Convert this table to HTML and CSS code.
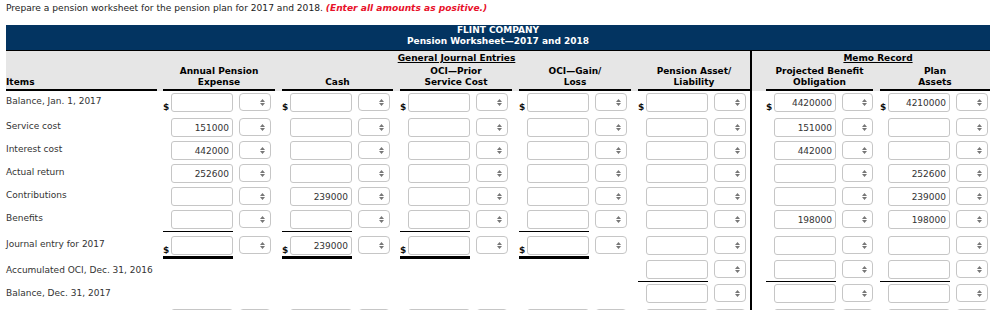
FILE: index.html
```html
<!DOCTYPE html>
<html lang="en">
<head>
<meta charset="utf-8">
<title>Pension Worksheet</title>
<link rel="stylesheet" href="styles.css">
</head>
<body>
<p class="intro">Prepare a pension worksheet for the pension plan for 2017 and 2018. <em class="note">(Enter all amounts as positive.)</em></p>
<div class="sheet">
  <div class="title"><div>FLINT COMPANY</div><div>Pension Worksheet—2017 and 2018</div></div>
  <div class="grid head">
    <div class="grp gje"><span>General Journal Entries</span></div>
    <div class="grp memo"><span>Memo Record</span></div>
    <div class="hc c0"><div class="hl">Items</div></div>
    <div class="hc c1"><div class="hl">Annual Pension<br>Expense</div></div>
    <div class="hc c2"><div class="hl">Cash</div></div>
    <div class="hc c3"><div class="hl">OCI—Prior<br>Service Cost</div></div>
    <div class="hc c4"><div class="hl">OCI—Gain/<br>Loss</div></div>
    <div class="hc c5"><div class="hl">Pension Asset/<br>Liability</div></div>
    <div class="hc c6"><div class="hl">Projected Benefit<br>Obligation</div></div>
    <div class="hc c7"><div class="hl">Plan<br>Assets</div></div>
  </div>

  <div class="grid row r-first">
    <div class="cell c0 lbl">Balance, Jan. 1, 2017</div>
    <div class="cell c1"><div class="fld"><span class="amt"><span class="cur">$</span><input class="num" type="text" value=""></span><span class="sel"><svg class="ud" viewBox="0 0 5 7" width="5" height="7"><path d="M0 3 2.5 0 5 3zM0 4 2.5 7 5 4z"/></svg></span></div></div>
    <div class="cell c2"><div class="fld"><span class="amt"><span class="cur">$</span><input class="num" type="text" value=""></span><span class="sel"><svg class="ud" viewBox="0 0 5 7" width="5" height="7"><path d="M0 3 2.5 0 5 3zM0 4 2.5 7 5 4z"/></svg></span></div></div>
    <div class="cell c3"><div class="fld"><span class="amt"><span class="cur">$</span><input class="num" type="text" value=""></span><span class="sel"><svg class="ud" viewBox="0 0 5 7" width="5" height="7"><path d="M0 3 2.5 0 5 3zM0 4 2.5 7 5 4z"/></svg></span></div></div>
    <div class="cell c4"><div class="fld"><span class="amt"><span class="cur">$</span><input class="num" type="text" value=""></span><span class="sel"><svg class="ud" viewBox="0 0 5 7" width="5" height="7"><path d="M0 3 2.5 0 5 3zM0 4 2.5 7 5 4z"/></svg></span></div></div>
    <div class="cell c5"><div class="fld"><span class="amt"><span class="cur">$</span><input class="num" type="text" value=""></span><span class="sel"><svg class="ud" viewBox="0 0 5 7" width="5" height="7"><path d="M0 3 2.5 0 5 3zM0 4 2.5 7 5 4z"/></svg></span></div></div>
    <div class="cell c6"><div class="fld"><span class="amt"><span class="cur">$</span><input class="num" type="text" value="4420000"></span><span class="sel"><svg class="ud" viewBox="0 0 5 7" width="5" height="7"><path d="M0 3 2.5 0 5 3zM0 4 2.5 7 5 4z"/></svg></span></div></div>
    <div class="cell c7"><div class="fld"><span class="amt"><span class="cur">$</span><input class="num" type="text" value="4210000"></span><span class="sel"><svg class="ud" viewBox="0 0 5 7" width="5" height="7"><path d="M0 3 2.5 0 5 3zM0 4 2.5 7 5 4z"/></svg></span></div></div>
  </div>

  <div class="grid row">
    <div class="cell c0 lbl">Service cost</div>
    <div class="cell c1"><div class="fld"><span class="amt"><span class="cur"></span><input class="num" type="text" value="151000"></span><span class="sel"><svg class="ud" viewBox="0 0 5 7" width="5" height="7"><path d="M0 3 2.5 0 5 3zM0 4 2.5 7 5 4z"/></svg></span></div></div>
    <div class="cell c2"><div class="fld"><span class="amt"><span class="cur"></span><input class="num" type="text" value=""></span><span class="sel"><svg class="ud" viewBox="0 0 5 7" width="5" height="7"><path d="M0 3 2.5 0 5 3zM0 4 2.5 7 5 4z"/></svg></span></div></div>
    <div class="cell c3"><div class="fld"><span class="amt"><span class="cur"></span><input class="num" type="text" value=""></span><span class="sel"><svg class="ud" viewBox="0 0 5 7" width="5" height="7"><path d="M0 3 2.5 0 5 3zM0 4 2.5 7 5 4z"/></svg></span></div></div>
    <div class="cell c4"><div class="fld"><span class="amt"><span class="cur"></span><input class="num" type="text" value=""></span><span class="sel"><svg class="ud" viewBox="0 0 5 7" width="5" height="7"><path d="M0 3 2.5 0 5 3zM0 4 2.5 7 5 4z"/></svg></span></div></div>
    <div class="cell c5"><div class="fld"><span class="amt"><span class="cur"></span><input class="num" type="text" value=""></span><span class="sel"><svg class="ud" viewBox="0 0 5 7" width="5" height="7"><path d="M0 3 2.5 0 5 3zM0 4 2.5 7 5 4z"/></svg></span></div></div>
    <div class="cell c6"><div class="fld"><span class="amt"><span class="cur"></span><input class="num" type="text" value="151000"></span><span class="sel"><svg class="ud" viewBox="0 0 5 7" width="5" height="7"><path d="M0 3 2.5 0 5 3zM0 4 2.5 7 5 4z"/></svg></span></div></div>
    <div class="cell c7"><div class="fld"><span class="amt"><span class="cur"></span><input class="num" type="text" value=""></span><span class="sel"><svg class="ud" viewBox="0 0 5 7" width="5" height="7"><path d="M0 3 2.5 0 5 3zM0 4 2.5 7 5 4z"/></svg></span></div></div>
  </div>

  <div class="grid row">
    <div class="cell c0 lbl">Interest cost</div>
    <div class="cell c1"><div class="fld"><span class="amt"><span class="cur"></span><input class="num" type="text" value="442000"></span><span class="sel"><svg class="ud" viewBox="0 0 5 7" width="5" height="7"><path d="M0 3 2.5 0 5 3zM0 4 2.5 7 5 4z"/></svg></span></div></div>
    <div class="cell c2"><div class="fld"><span class="amt"><span class="cur"></span><input class="num" type="text" value=""></span><span class="sel"><svg class="ud" viewBox="0 0 5 7" width="5" height="7"><path d="M0 3 2.5 0 5 3zM0 4 2.5 7 5 4z"/></svg></span></div></div>
    <div class="cell c3"><div class="fld"><span class="amt"><span class="cur"></span><input class="num" type="text" value=""></span><span class="sel"><svg class="ud" viewBox="0 0 5 7" width="5" height="7"><path d="M0 3 2.5 0 5 3zM0 4 2.5 7 5 4z"/></svg></span></div></div>
    <div class="cell c4"><div class="fld"><span class="amt"><span class="cur"></span><input class="num" type="text" value=""></span><span class="sel"><svg class="ud" viewBox="0 0 5 7" width="5" height="7"><path d="M0 3 2.5 0 5 3zM0 4 2.5 7 5 4z"/></svg></span></div></div>
    <div class="cell c5"><div class="fld"><span class="amt"><span class="cur"></span><input class="num" type="text" value=""></span><span class="sel"><svg class="ud" viewBox="0 0 5 7" width="5" height="7"><path d="M0 3 2.5 0 5 3zM0 4 2.5 7 5 4z"/></svg></span></div></div>
    <div class="cell c6"><div class="fld"><span class="amt"><span class="cur"></span><input class="num" type="text" value="442000"></span><span class="sel"><svg class="ud" viewBox="0 0 5 7" width="5" height="7"><path d="M0 3 2.5 0 5 3zM0 4 2.5 7 5 4z"/></svg></span></div></div>
    <div class="cell c7"><div class="fld"><span class="amt"><span class="cur"></span><input class="num" type="text" value=""></span><span class="sel"><svg class="ud" viewBox="0 0 5 7" width="5" height="7"><path d="M0 3 2.5 0 5 3zM0 4 2.5 7 5 4z"/></svg></span></div></div>
  </div>

  <div class="grid row">
    <div class="cell c0 lbl">Actual return</div>
    <div class="cell c1"><div class="fld"><span class="amt"><span class="cur"></span><input class="num" type="text" value="252600"></span><span class="sel"><svg class="ud" viewBox="0 0 5 7" width="5" height="7"><path d="M0 3 2.5 0 5 3zM0 4 2.5 7 5 4z"/></svg></span></div></div>
    <div class="cell c2"><div class="fld"><span class="amt"><span class="cur"></span><input class="num" type="text" value=""></span><span class="sel"><svg class="ud" viewBox="0 0 5 7" width="5" height="7"><path d="M0 3 2.5 0 5 3zM0 4 2.5 7 5 4z"/></svg></span></div></div>
    <div class="cell c3"><div class="fld"><span class="amt"><span class="cur"></span><input class="num" type="text" value=""></span><span class="sel"><svg class="ud" viewBox="0 0 5 7" width="5" height="7"><path d="M0 3 2.5 0 5 3zM0 4 2.5 7 5 4z"/></svg></span></div></div>
    <div class="cell c4"><div class="fld"><span class="amt"><span class="cur"></span><input class="num" type="text" value=""></span><span class="sel"><svg class="ud" viewBox="0 0 5 7" width="5" height="7"><path d="M0 3 2.5 0 5 3zM0 4 2.5 7 5 4z"/></svg></span></div></div>
    <div class="cell c5"><div class="fld"><span class="amt"><span class="cur"></span><input class="num" type="text" value=""></span><span class="sel"><svg class="ud" viewBox="0 0 5 7" width="5" height="7"><path d="M0 3 2.5 0 5 3zM0 4 2.5 7 5 4z"/></svg></span></div></div>
    <div class="cell c6"><div class="fld"><span class="amt"><span class="cur"></span><input class="num" type="text" value=""></span><span class="sel"><svg class="ud" viewBox="0 0 5 7" width="5" height="7"><path d="M0 3 2.5 0 5 3zM0 4 2.5 7 5 4z"/></svg></span></div></div>
    <div class="cell c7"><div class="fld"><span class="amt"><span class="cur"></span><input class="num" type="text" value="252600"></span><span class="sel"><svg class="ud" viewBox="0 0 5 7" width="5" height="7"><path d="M0 3 2.5 0 5 3zM0 4 2.5 7 5 4z"/></svg></span></div></div>
  </div>

  <div class="grid row">
    <div class="cell c0 lbl">Contributions</div>
    <div class="cell c1"><div class="fld"><span class="amt"><span class="cur"></span><input class="num" type="text" value=""></span><span class="sel"><svg class="ud" viewBox="0 0 5 7" width="5" height="7"><path d="M0 3 2.5 0 5 3zM0 4 2.5 7 5 4z"/></svg></span></div></div>
    <div class="cell c2"><div class="fld"><span class="amt"><span class="cur"></span><input class="num" type="text" value="239000"></span><span class="sel"><svg class="ud" viewBox="0 0 5 7" width="5" height="7"><path d="M0 3 2.5 0 5 3zM0 4 2.5 7 5 4z"/></svg></span></div></div>
    <div class="cell c3"><div class="fld"><span class="amt"><span class="cur"></span><input class="num" type="text" value=""></span><span class="sel"><svg class="ud" viewBox="0 0 5 7" width="5" height="7"><path d="M0 3 2.5 0 5 3zM0 4 2.5 7 5 4z"/></svg></span></div></div>
    <div class="cell c4"><div class="fld"><span class="amt"><span class="cur"></span><input class="num" type="text" value=""></span><span class="sel"><svg class="ud" viewBox="0 0 5 7" width="5" height="7"><path d="M0 3 2.5 0 5 3zM0 4 2.5 7 5 4z"/></svg></span></div></div>
    <div class="cell c5"><div class="fld"><span class="amt"><span class="cur"></span><input class="num" type="text" value=""></span><span class="sel"><svg class="ud" viewBox="0 0 5 7" width="5" height="7"><path d="M0 3 2.5 0 5 3zM0 4 2.5 7 5 4z"/></svg></span></div></div>
    <div class="cell c6"><div class="fld"><span class="amt"><span class="cur"></span><input class="num" type="text" value=""></span><span class="sel"><svg class="ud" viewBox="0 0 5 7" width="5" height="7"><path d="M0 3 2.5 0 5 3zM0 4 2.5 7 5 4z"/></svg></span></div></div>
    <div class="cell c7"><div class="fld"><span class="amt"><span class="cur"></span><input class="num" type="text" value="239000"></span><span class="sel"><svg class="ud" viewBox="0 0 5 7" width="5" height="7"><path d="M0 3 2.5 0 5 3zM0 4 2.5 7 5 4z"/></svg></span></div></div>
  </div>

  <div class="grid row">
    <div class="cell c0 lbl">Benefits</div>
    <div class="cell c1"><div class="fld"><span class="amt ul"><span class="cur"></span><input class="num" type="text" value=""></span><span class="sel"><svg class="ud" viewBox="0 0 5 7" width="5" height="7"><path d="M0 3 2.5 0 5 3zM0 4 2.5 7 5 4z"/></svg></span></div></div>
    <div class="cell c2"><div class="fld"><span class="amt ul"><span class="cur"></span><input class="num" type="text" value=""></span><span class="sel"><svg class="ud" viewBox="0 0 5 7" width="5" height="7"><path d="M0 3 2.5 0 5 3zM0 4 2.5 7 5 4z"/></svg></span></div></div>
    <div class="cell c3"><div class="fld"><span class="amt ul"><span class="cur"></span><input class="num" type="text" value=""></span><span class="sel"><svg class="ud" viewBox="0 0 5 7" width="5" height="7"><path d="M0 3 2.5 0 5 3zM0 4 2.5 7 5 4z"/></svg></span></div></div>
    <div class="cell c4"><div class="fld"><span class="amt ul"><span class="cur"></span><input class="num" type="text" value=""></span><span class="sel"><svg class="ud" viewBox="0 0 5 7" width="5" height="7"><path d="M0 3 2.5 0 5 3zM0 4 2.5 7 5 4z"/></svg></span></div></div>
    <div class="cell c5"><div class="fld"><span class="amt"><span class="cur"></span><input class="num" type="text" value=""></span><span class="sel"><svg class="ud" viewBox="0 0 5 7" width="5" height="7"><path d="M0 3 2.5 0 5 3zM0 4 2.5 7 5 4z"/></svg></span></div></div>
    <div class="cell c6"><div class="fld"><span class="amt"><span class="cur"></span><input class="num" type="text" value="198000"></span><span class="sel"><svg class="ud" viewBox="0 0 5 7" width="5" height="7"><path d="M0 3 2.5 0 5 3zM0 4 2.5 7 5 4z"/></svg></span></div></div>
    <div class="cell c7"><div class="fld"><span class="amt"><span class="cur"></span><input class="num" type="text" value="198000"></span><span class="sel"><svg class="ud" viewBox="0 0 5 7" width="5" height="7"><path d="M0 3 2.5 0 5 3zM0 4 2.5 7 5 4z"/></svg></span></div></div>
  </div>

  <div class="grid row r-je">
    <div class="cell c0 lbl">Journal entry for 2017</div>
    <div class="cell c1"><div class="fld"><span class="amt ul2"><span class="cur">$</span><input class="num" type="text" value=""></span><span class="sel"><svg class="ud" viewBox="0 0 5 7" width="5" height="7"><path d="M0 3 2.5 0 5 3zM0 4 2.5 7 5 4z"/></svg></span></div></div>
    <div class="cell c2"><div class="fld"><span class="amt ul2"><span class="cur">$</span><input class="num" type="text" value="239000"></span><span class="sel"><svg class="ud" viewBox="0 0 5 7" width="5" height="7"><path d="M0 3 2.5 0 5 3zM0 4 2.5 7 5 4z"/></svg></span></div></div>
    <div class="cell c3"><div class="fld"><span class="amt ul2"><span class="cur">$</span><input class="num" type="text" value=""></span><span class="sel"><svg class="ud" viewBox="0 0 5 7" width="5" height="7"><path d="M0 3 2.5 0 5 3zM0 4 2.5 7 5 4z"/></svg></span></div></div>
    <div class="cell c4"><div class="fld"><span class="amt ul2"><span class="cur">$</span><input class="num" type="text" value=""></span><span class="sel"><svg class="ud" viewBox="0 0 5 7" width="5" height="7"><path d="M0 3 2.5 0 5 3zM0 4 2.5 7 5 4z"/></svg></span></div></div>
    <div class="cell c5"><div class="fld"><span class="amt"><span class="cur"></span><input class="num" type="text" value=""></span><span class="sel"><svg class="ud" viewBox="0 0 5 7" width="5" height="7"><path d="M0 3 2.5 0 5 3zM0 4 2.5 7 5 4z"/></svg></span></div></div>
    <div class="cell c6"><div class="fld"><span class="amt"><span class="cur"></span><input class="num" type="text" value=""></span><span class="sel"><svg class="ud" viewBox="0 0 5 7" width="5" height="7"><path d="M0 3 2.5 0 5 3zM0 4 2.5 7 5 4z"/></svg></span></div></div>
    <div class="cell c7"><div class="fld"><span class="amt"><span class="cur"></span><input class="num" type="text" value=""></span><span class="sel"><svg class="ud" viewBox="0 0 5 7" width="5" height="7"><path d="M0 3 2.5 0 5 3zM0 4 2.5 7 5 4z"/></svg></span></div></div>
  </div>

  <div class="grid row r-aoci">
    <div class="cell c0 lbl">Accumulated OCI, Dec. 31, 2016</div>
    <div class="cell c1"></div>
    <div class="cell c2"></div>
    <div class="cell c3"></div>
    <div class="cell c4"></div>
    <div class="cell c5"><div class="fld"><span class="amt ul"><span class="cur"></span><input class="num" type="text" value=""></span><span class="sel"><svg class="ud" viewBox="0 0 5 7" width="5" height="7"><path d="M0 3 2.5 0 5 3zM0 4 2.5 7 5 4z"/></svg></span></div></div>
    <div class="cell c6"><div class="fld"><span class="amt ul"><span class="cur"></span><input class="num" type="text" value=""></span><span class="sel"><svg class="ud" viewBox="0 0 5 7" width="5" height="7"><path d="M0 3 2.5 0 5 3zM0 4 2.5 7 5 4z"/></svg></span></div></div>
    <div class="cell c7"><div class="fld"><span class="amt ul"><span class="cur"></span><input class="num" type="text" value=""></span><span class="sel"><svg class="ud" viewBox="0 0 5 7" width="5" height="7"><path d="M0 3 2.5 0 5 3zM0 4 2.5 7 5 4z"/></svg></span></div></div>
  </div>

  <div class="grid row r-end">
    <div class="cell c0 lbl">Balance, Dec. 31, 2017</div>
    <div class="cell c1"></div>
    <div class="cell c2"></div>
    <div class="cell c3"></div>
    <div class="cell c4"></div>
    <div class="cell c5"><div class="fld"><span class="amt"><span class="cur"></span><input class="num" type="text" value=""></span><span class="sel"><svg class="ud" viewBox="0 0 5 7" width="5" height="7"><path d="M0 3 2.5 0 5 3zM0 4 2.5 7 5 4z"/></svg></span></div></div>
    <div class="cell c6"><div class="fld"><span class="amt"><span class="cur"></span><input class="num" type="text" value=""></span><span class="sel"><svg class="ud" viewBox="0 0 5 7" width="5" height="7"><path d="M0 3 2.5 0 5 3zM0 4 2.5 7 5 4z"/></svg></span></div></div>
    <div class="cell c7"><div class="fld"><span class="amt"><span class="cur"></span><input class="num" type="text" value=""></span><span class="sel"><svg class="ud" viewBox="0 0 5 7" width="5" height="7"><path d="M0 3 2.5 0 5 3zM0 4 2.5 7 5 4z"/></svg></span></div></div>
  </div>

  <div class="grid row">
    <div class="cell c0 lbl"></div>
    <div class="cell c1"><div class="fld"><span class="amt"><span class="cur"></span><input class="num" type="text" value=""></span><span class="sel"><svg class="ud" viewBox="0 0 5 7" width="5" height="7"><path d="M0 3 2.5 0 5 3zM0 4 2.5 7 5 4z"/></svg></span></div></div>
    <div class="cell c2"><div class="fld"><span class="amt"><span class="cur"></span><input class="num" type="text" value=""></span><span class="sel"><svg class="ud" viewBox="0 0 5 7" width="5" height="7"><path d="M0 3 2.5 0 5 3zM0 4 2.5 7 5 4z"/></svg></span></div></div>
    <div class="cell c3"><div class="fld"><span class="amt"><span class="cur"></span><input class="num" type="text" value=""></span><span class="sel"><svg class="ud" viewBox="0 0 5 7" width="5" height="7"><path d="M0 3 2.5 0 5 3zM0 4 2.5 7 5 4z"/></svg></span></div></div>
    <div class="cell c4"><div class="fld"><span class="amt"><span class="cur"></span><input class="num" type="text" value=""></span><span class="sel"><svg class="ud" viewBox="0 0 5 7" width="5" height="7"><path d="M0 3 2.5 0 5 3zM0 4 2.5 7 5 4z"/></svg></span></div></div>
    <div class="cell c5"><div class="fld"><span class="amt"><span class="cur"></span><input class="num" type="text" value=""></span><span class="sel"><svg class="ud" viewBox="0 0 5 7" width="5" height="7"><path d="M0 3 2.5 0 5 3zM0 4 2.5 7 5 4z"/></svg></span></div></div>
    <div class="cell c6"><div class="fld"><span class="amt"><span class="cur"></span><input class="num" type="text" value=""></span><span class="sel"><svg class="ud" viewBox="0 0 5 7" width="5" height="7"><path d="M0 3 2.5 0 5 3zM0 4 2.5 7 5 4z"/></svg></span></div></div>
    <div class="cell c7"><div class="fld"><span class="amt"><span class="cur"></span><input class="num" type="text" value=""></span><span class="sel"><svg class="ud" viewBox="0 0 5 7" width="5" height="7"><path d="M0 3 2.5 0 5 3zM0 4 2.5 7 5 4z"/></svg></span></div></div>
  </div>
</div>
</body>
</html>
```

FILE: styles.css
```css
html, body {
  margin: 0;
  overflow: hidden;
  background: #fff;
}

body {
  padding: 2px 6px 0;
  font-family: "DejaVu Sans", Verdana, sans-serif;
  font-size: 9px;
  color: #222;
}

.intro {
  margin: 0 0 11px;
  line-height: 12px;
  font-size: 9.1px;
  color: #222;
}

.note {
  color: #e8112a;
  font-weight: bold;
  font-style: italic;
}

.sheet {
  width: 984px;
}

.title {
  box-sizing: border-box;
  height: 26px;
  background: #033461;
  color: #fff;
  font-weight: bold;
  text-align: center;
  line-height: 11px;
  border-bottom: 1px solid #000;
}

.grid {
  display: grid;
  grid-template-columns: 157px 119px 118px 119px 119px 114px 128px 110px;
}

.head {
  background: #e6e6e6;
  grid-template-rows: 15px auto;
  color: #000;
  font-weight: bold;
}

.grp {
  grid-row: 1;
  text-align: center;
  line-height: 12px;
  padding-top: 1px;
}

.grp span {
  text-decoration: underline;
}

.gje {
  grid-column: 2 / 7;
  border-right: 2px solid #000;
}

.memo {
  grid-column: 7 / 9;
  padding-left: 14px;
}

.hc {
  grid-row: 2;
  display: flex;
  align-items: flex-end;
}

.hl {
  flex: 1;
  border-bottom: 2px solid #000;
  text-align: center;
  line-height: 11px;
  padding-bottom: 1px;
}

.c0 .hl {
  text-align: left;
}

.c0 { padding-right: 6px; }
.c1, .c2, .c3, .c4 { padding-right: 7px; }
.c5 { border-right: 2px solid #000; }
.c6 { padding-left: 14px; padding-right: 7px; }

.cell {
  padding-top: 2px;
  padding-bottom: 2px;
}

.r-first .cell { padding-bottom: 4px; }
.r-je .cell { padding-bottom: 0; }
.r-aoci .cell { padding-top: 1px; padding-bottom: 0; }
.r-end .cell { padding-bottom: 4px; }

.lbl {
  padding-top: 4px;
  line-height: 12px;
  color: #333;
  white-space: nowrap;
}

.r-aoci .lbl { padding-top: 5px; }
.r-end .lbl { padding-top: 5px; }

.fld {
  display: flex;
  align-items: flex-start;
}

.amt {
  display: flex;
  align-items: flex-end;
}

.ul {
  padding-bottom: 2px;
  border-bottom: 1px solid #000;
}

.ul2 {
  padding-bottom: 1px;
  border-bottom: 3px solid #000;
}

.cur {
  width: 8px;
  font-weight: bold;
  line-height: 10px;
  color: #111;
}

.num {
  box-sizing: border-box;
  width: 62px;
  height: 19px;
  margin: 0;
  padding: 0 3px 0 2px;
  border: 1px solid #c6c6c6;
  border-radius: 3px;
  background: #fff;
  font-family: "DejaVu Sans", Verdana, sans-serif;
  font-size: 9px;
  color: #333;
  text-align: right;
}

.sel {
  box-sizing: border-box;
  width: 32px;
  height: 18px;
  margin-left: 6px;
  padding-right: 5px;
  display: flex;
  align-items: center;
  justify-content: flex-end;
  border: 1px solid #c6c6c6;
  border-radius: 4px;
  background: #fff;
}

.ud {
  display: block;
  fill: #777;
}
```
